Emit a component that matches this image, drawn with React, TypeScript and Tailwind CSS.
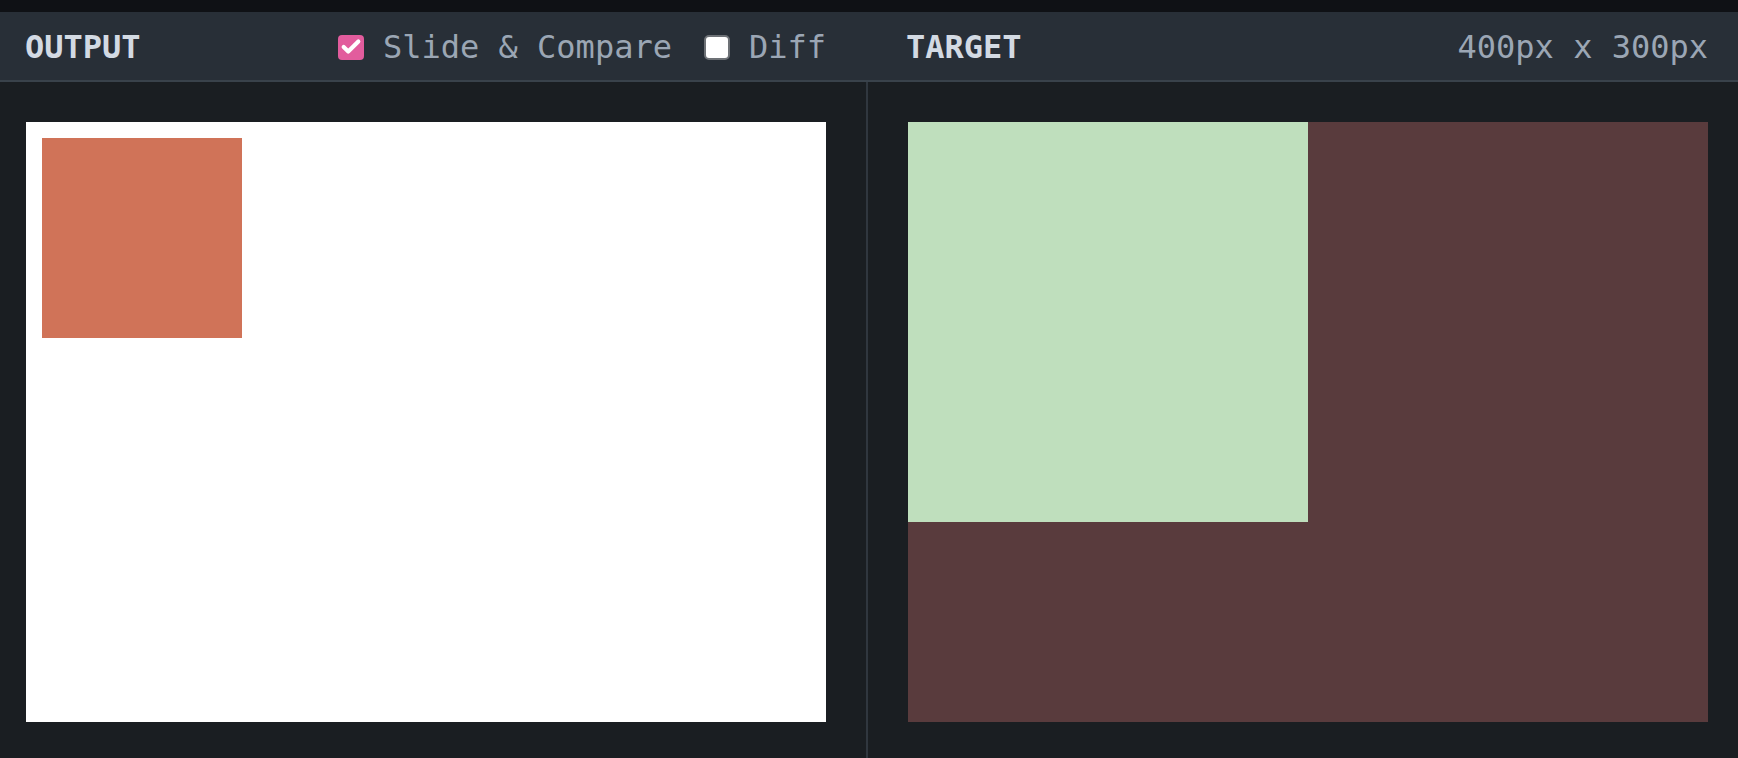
import { Check } from "lucide-react";

function Toggle({ label, checked }: { label: string; checked: boolean }) {
  return (
    <label className="flex items-center gap-[19px]">
      {checked ? (
        <span className="flex h-[25px] w-[26px] items-center justify-center rounded-[4px] bg-[#e25c9d]">
          <Check size={22} strokeWidth={4.5} className="text-white" />
        </span>
      ) : (
        <span className="block h-[25px] w-[26px] rounded-[5px] border-2 border-[#6d7176] bg-white" />
      )}
      <span className="text-[32px] leading-none text-[#9ba6b4]">{label}</span>
    </label>
  );
}

export default function App() {
  return (
    <div className="h-[758px] w-[1738px] overflow-hidden bg-[#1a1e22] font-['DejaVu_Sans_Mono',monospace]">
      <div className="h-3 bg-[#0f1115]" />

      {/* header */}
      <div className="flex h-[70px] border-b-2 border-[#39424b] bg-[#282f37]">
        <div className="flex w-[866px] items-center justify-between pl-[25px] pr-[40px] pt-[2px]">
          <span className="text-[32px] font-bold leading-none text-[#d3dae3]">OUTPUT</span>
          <div className="flex items-center gap-[32px]">
            <Toggle label="Slide & Compare" checked />
            <Toggle label="Diff" checked={false} />
          </div>
        </div>
        <div className="flex flex-1 items-center justify-between pl-[40px] pr-[30px] pt-[2px]">
          <span className="text-[32px] font-bold leading-none text-[#d3dae3]">TARGET</span>
          <span className="text-[32px] leading-none text-[#9ba6b4]">400px x 300px</span>
        </div>
      </div>

      {/* panes */}
      <div className="flex h-[676px]">
        <div className="w-[866px] pl-[26px] pt-10">
          <div className="h-[600px] w-[800px] bg-white p-4">
            <div className="size-[200px] bg-[#d07358]" />
          </div>
        </div>
        <div className="flex-1 border-l-2 border-[#30373f] pl-10 pt-10">
          <div className="h-[600px] w-[800px] bg-[#593b3d]">
            <div className="size-[400px] bg-[#bfdfbd]" />
          </div>
        </div>
      </div>
    </div>
  );
}
